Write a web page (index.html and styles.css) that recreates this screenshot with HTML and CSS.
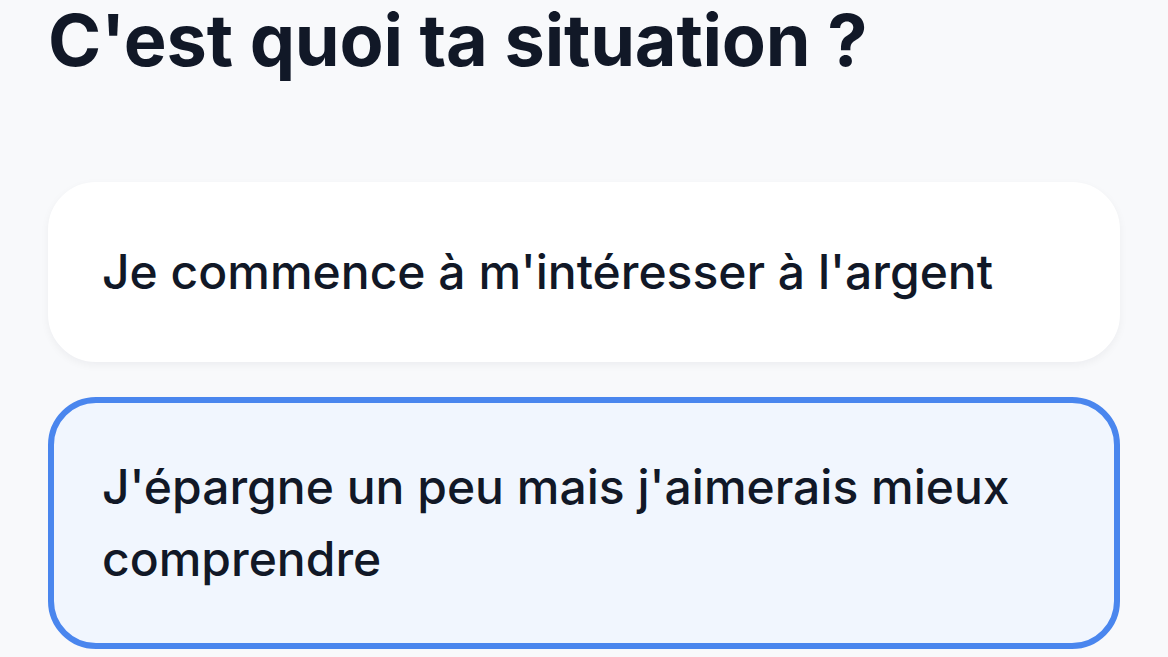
FILE: index.html
```html
<!DOCTYPE html>
<html lang="fr">
<head>
    <meta charset="UTF-8">
    <meta name="viewport" content="width=device-width, initial-scale=1.0">
    <title>Ta situation</title>
    <link rel="stylesheet" href="styles.css">
</head>
<body>
    <div class="page">
        <h1 class="titre">C'est quoi ta situation ?</h1>
        <div class="choix">
            <button class="option">Je commence à m'intéresser à l'argent</button>
            <button class="option active">J'épargne un peu mais j'aimerais mieux comprendre</button>
        </div>
    </div>
</body>
</html>
```

FILE: styles.css
```css
body{
    margin: 0;
    background-color: #f8f9fb;
    font-family: Inter, "Noto Sans", sans-serif;
    color: #111827;
}
.page{
    padding: 4px 48px 48px 48px;
}
.titre{
    margin: 0;
    font-size: 72px;
    font-weight: 700;
    line-height: 1;
    letter-spacing: -0.2px;
}
.choix{
    display: flex;
    flex-direction: column;
    gap: 35px;
    margin-top: 106px;
}
.option{
    display: block;
    width: 100%;
    text-align: left;
    font-family: inherit;
    font-size: 48px;
    font-weight: 500;
    line-height: 72px;
    color: #111827;
    background-color: #ffffff;
    border: 6px solid #ffffff;
    border-radius: 48px;
    padding: 48px 48px;
    box-shadow: 0 3px 8px rgba(17, 24, 39, 0.05);
    cursor: pointer;
}
.option.active{
    background-color: #f1f6fe;
    border-color: #4a86ee;
    box-shadow: none;
}
```
